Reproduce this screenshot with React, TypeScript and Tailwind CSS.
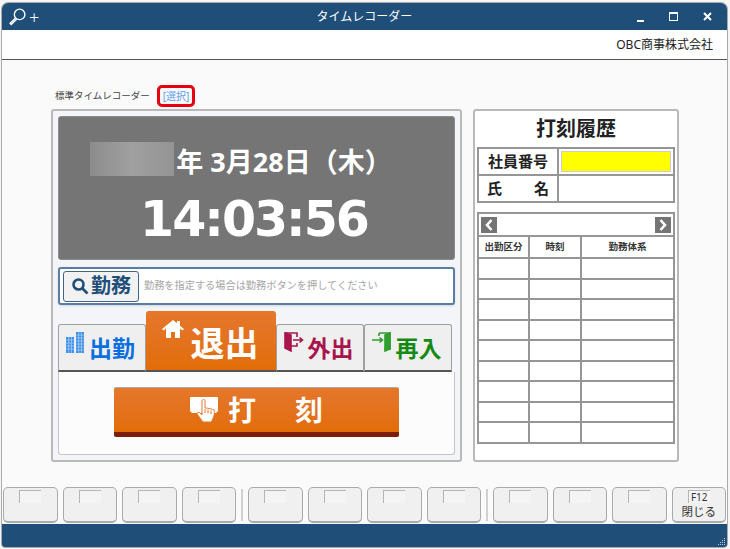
const sans = "font-['Noto_Sans','Noto_Sans_CJK_JP',sans-serif]"

const FKey = ({ label, text }: { label?: string; text?: string }) => (
  <div className="flex h-[36px] flex-1 flex-col items-center rounded-[5px] border border-b-2 border-[#aaaaaa] bg-[#f0f0f0] pt-[2px]">
    <div className="flex h-[13px] w-[22px] shrink-0 items-center justify-center border-t border-l border-[#b5b5b5] bg-[#f4f4f4] text-[10px] leading-none text-[#333]">
      {label}
    </div>
    {text && <div className="mt-[3px] text-[11.5px] leading-none text-[#333]">{text}</div>}
  </div>
)

const Sep = () => <div className="h-[32px] w-[2px] self-center bg-[#d0d0d0]" />

const Tab = ({ color, label, children, w }: { color: string; label: string; children: React.ReactNode; w: string }) => (
  <div className={`flex h-[48px] items-start justify-center rounded-t-[3px] border border-b-2 border-[#a0a0a0] border-b-[#555] bg-[#efefef] pt-[7px] pr-[3px] text-[23px] font-bold ${w} ${color}`}>
    {children}
    <span className="mt-[5px] ml-[4px] leading-none">{label}</span>
  </div>
)

const App = () => {
  const rows = Array.from({ length: 9 })
  return (
    <div className={`flex h-[549px] w-[730px] flex-col overflow-hidden bg-[#f5f5f5] pt-[2px] pr-[2px] pb-[1px] pl-[1px] ${sans}`}>
      <div className="flex h-full flex-col overflow-hidden rounded-t-[7px] rounded-b-[4px] border border-[#aaaaaa]">
        {/* title bar */}
        <div className="relative flex h-[27px] shrink-0 items-center justify-between bg-[#1f4e79] pr-[7px] pl-[6px] text-white">
          <div className="flex items-center gap-[2px]">
            <svg width="19" height="19" viewBox="0 0 18 18" fill="none" stroke="white" strokeWidth="1.3">
              <circle cx="11" cy="7" r="5" />
              <path d="M7.2 10.5 2 15.500l1 1 5.200-5" />
            </svg>
            <span className="text-[18px] leading-none font-light">+</span>
          </div>
          <div className="absolute inset-x-0 text-center text-[12px] leading-none">タイムレコーダー</div>
          <div className="flex items-center gap-[25px] pr-[8px]">
            <div className="mt-[8px] h-[2px] w-[7px] bg-white" />
            <div className="h-[9px] w-[9px] border border-t-2 border-white" />
            <svg width="9" height="9" viewBox="0 0 9 9" stroke="white" strokeWidth="2">
              <path d="M1 1l7 7M8 1 1 8" />
            </svg>
          </div>
        </div>
        {/* company */}
        <div className="flex h-[30px] shrink-0 items-center justify-end border-b border-[#555] bg-white pr-[14px] text-[12px] text-[#222]">
          OBC商事株式会社
        </div>
        {/* body */}
        <div className="flex flex-1 flex-col bg-[#fafafa] pl-[49px]">
          <div className="flex h-[49px] items-start pt-[31px] pl-[4px] text-[9.5px] text-[#444]">
            <span className="leading-none">標準タイムレコーダー</span>
            <span className="relative ml-[13px] text-[10px] leading-none text-[#5b9bf0]">
              [選択]
              <span className="absolute -inset-x-[6px] -inset-y-[6px] rounded-[5px] border-[3px] border-[#e60012]" />
            </span>
          </div>
          <div className="flex gap-[11px]">
            {/* left panel */}
            <div className="flex h-[353px] w-[411px] flex-col rounded-[3px] border-2 border-[#b9b9b9] bg-[#f3f5f9] p-[5px]">
              <div className="relative flex h-[144px] shrink-0 flex-col items-center rounded-[3px] border border-[#8a8a8a] bg-[#757575] text-white">
                <div className="absolute top-[25px] left-[31px] h-[34px] w-[84px] bg-gradient-to-r from-[#8c8c8c] via-[#a0a0a0] to-[#949494]" />
                <div className="relative mt-[27px] ml-[55px] text-[27px] leading-[36px] font-bold">年 3月28日（木）</div>
                <div className="relative mt-[15px] -ml-[5px] font-['DejaVu_Sans',sans-serif] text-[49px] leading-none font-bold tracking-[-2px]">14:03:56</div>
              </div>
              <div className="mt-[7px] flex h-[38px] shrink-0 items-center rounded-[3px] border-2 border-[#5a7ea3] bg-white pl-[3px] shadow-sm">
                <div className="flex h-[31px] w-[76px] shrink-0 items-center justify-center gap-[2px] rounded-[3px] border border-[#3f6488] bg-[#f2f2f2] text-[20px] font-bold text-[#1f4e79]">
                  <svg width="18" height="18" viewBox="0 0 18 18" fill="none" stroke="#1f4e79" strokeWidth="2.6">
                    <circle cx="7.500" cy="7.500" r="5" />
                    <path d="m11 11 5.500 5.500" />
                  </svg>
                  <span className="leading-none">勤務</span>
                </div>
                <span className="ml-[5px] text-[10.2px] text-[#a5a5a5]">勤務を指定する場合は勤務ボタンを押してください</span>
              </div>
              <div className="mt-[5px] flex h-[62px] shrink-0 items-end">
                <Tab w="w-[88px]" color="text-[#0b6fe0]" label="出勤">
                  <svg width="19" height="22" viewBox="0 0 19 22">
                    <rect x="0" y="5" width="8" height="16" fill="#3f8fe8" />
                    <rect x="10" y="0" width="8" height="21" fill="#3f8fe8" />
                    <path d="M0 8h8M0 11h8M0 14h8M0 17h8M10 3h8M10 6h8M10 9h8M10 12h8M10 15h8M10 18h8M2.700 5v16M5.400 5v16M12.700 0v21M15.400 0v21" stroke="#bcdcfa" strokeWidth="0.6" />
                  </svg>
                </Tab>
                <div className="flex h-[61px] w-[130px] items-start justify-center rounded-t-[3px] border-b-2 border-b-[#555] bg-gradient-to-b from-[#e5772b] to-[#e26d05] pt-[9px] pr-[2px] text-[34px] font-bold text-white">
                  <svg width="22" height="18" viewBox="0 0 22 18" fill="white">
                    <path d="M11 0 0 9l1.500 1.500L4 8.500V18h5v-6h4v6h5V8.500l2.500 2L22 9l-4-3.300V1h-3v2.200z" />
                  </svg>
                  <span className="mt-[6px] ml-[7px] leading-none">退出</span>
                </div>
                <Tab w="w-[88px]" color="text-[#a8144c]" label="外出">
                  <svg width="20" height="20" viewBox="0 0 20 20" fill="none" stroke="#a8144c" strokeWidth="1.600">
                    <path d="M1 1h12v4M13 11v3H7" />
                    <path d="M1 1l6 2v16l-6-3z" fill="#a8144c" />
                    <path d="M9 8h9M15.500 5.500 18.500 8l-3 2.500" />
                  </svg>
                </Tab>
                <Tab w="w-[88px]" color="text-[#148a14]" label="再入">
                  <svg width="20" height="20" viewBox="0 0 20 20" fill="none" stroke="#2f9e2f" strokeWidth="1.600">
                    <path d="M7 1h11v16h-6M7 1v3" />
                    <path d="M18 1l-5 2v16l5-2z" fill="#2f9e2f" />
                    <path d="M0 8h10M7.500 5.500 10.500 8l-3 2.500" />
                  </svg>
                </Tab>
              </div>
              <div className="flex flex-1 items-start justify-center rounded-b-[3px] border border-t-0 border-[#c4c4c4] bg-[#fcfcfc] pt-[15px]">
                <div className="flex h-[50px] w-[285px] items-center justify-center gap-[10px] rounded-[2px] border-t border-b-[5px] border-[#aaa] border-b-[#7a1e08] bg-gradient-to-b from-[#e5772b] to-[#e26d05] text-[28px] font-bold text-white">
                  <svg width="28" height="30" viewBox="0 0 28 30">
                    <path d="M0 2h28v14l-2 2H2l-2-2z" fill="white" />
                    <path d="M12 6c0-2 3-2 3 0v7c3 0 7 1 9 2 1 3 0 8-3 12H13L7 19c0-2 2-2 3-1l2 2z" fill="white" stroke="#e5772b" strokeWidth="1" />
                    <path d="M15 14v4M18 14.500v4M21 15.500v3.500" stroke="#e5772b" strokeWidth="1" />
                  </svg>
                  <span className="leading-none">打<span className="ml-[39px]">刻</span></span>
                </div>
              </div>
            </div>
            {/* right panel */}
            <div className="flex h-[353px] w-[206px] flex-col rounded-[3px] border-2 border-[#b9b9b9] bg-white pr-[2px] pl-[2px]">
              <div className="flex h-[36px] shrink-0 items-center justify-center text-[20px] font-bold text-[#222]">打刻履歴</div>
              <div className="grid grid-cols-[78px_1fr] grid-rows-[25px_25px] gap-[2px] border-2 border-[#969696] bg-[#969696] text-[15px] font-bold text-[#222]">
                <div className="flex items-center justify-center bg-white">社員番号</div>
                <div className="bg-white p-[2px]">
                  <div className="h-full border border-[#cccccc] bg-[#ffff00]" />
                </div>
                <div className="flex items-center justify-between bg-white px-[8px]">
                  <span>氏</span><span>名</span>
                </div>
                <div className="bg-white" />
              </div>
              <div className="mt-[9px] flex flex-col gap-[2px] border-2 border-[#969696] bg-[#969696]">
                <div className="flex h-[21px] items-center justify-between bg-white px-[2px]">
                  <div className="flex h-[16px] w-[16px] items-center justify-center bg-[#757575]">
                    <svg width="10" height="12" viewBox="0 0 10 12" fill="none" stroke="white" strokeWidth="2.600"><path d="M7.500 1 3 6l4.500 5" /></svg>
                  </div>
                  <div className="flex h-[16px] w-[16px] items-center justify-center bg-[#757575]">
                    <svg width="10" height="12" viewBox="0 0 10 12" fill="none" stroke="white" strokeWidth="2.600"><path d="M2.500 1 7 6l-4.500 5" /></svg>
                  </div>
                </div>
                <div className="grid grid-cols-[49px_50px_1fr] grid-rows-[20px_repeat(9,18.5px)] gap-[2px] text-[9.5px] font-bold text-[#333]">
                  <div className="flex items-center justify-center bg-white">出勤区分</div>
                  <div className="flex items-center justify-center bg-white">時刻</div>
                  <div className="flex items-center justify-center bg-white">勤務体系</div>
                  {rows.map((_, i) => (
                    <div key={i} className="contents">
                      <div className="bg-white" />
                      <div className="bg-white" />
                      <div className="bg-white" />
                    </div>
                  ))}
                </div>
              </div>
            </div>
          </div>
          <div className="flex-1" />
        </div>
        {/* function keys */}
        <div className="flex shrink-0 gap-[5px] bg-[#fafafa] pr-[1px] pl-[1px]">
          <FKey /><FKey /><FKey /><FKey />
          <Sep />
          <FKey /><FKey /><FKey /><FKey />
          <Sep />
          <FKey /><FKey /><FKey />
          <FKey label="F12" text="閉じる" />
        </div>
        {/* status bar */}
        <div className="relative mt-[1px] h-[23px] shrink-0 bg-[#1f4e79]">
          <svg className="absolute right-[1px] bottom-[1px]" width="9" height="9" viewBox="0 0 9 9" fill="#b9c9d9">
            <rect x="7" y="1" width="1" height="1" />
            <rect x="5" y="3" width="1" height="1" />
            <rect x="7" y="3" width="1" height="1" />
            <rect x="3" y="5" width="1" height="1" />
            <rect x="5" y="5" width="1" height="1" />
            <rect x="7" y="5" width="1" height="1" />
            <rect x="1" y="7" width="1" height="1" />
            <rect x="3" y="7" width="1" height="1" />
            <rect x="5" y="7" width="1" height="1" />
            <rect x="7" y="7" width="1" height="1" />
          </svg>
        </div>
      </div>
    </div>
  )
}

export default App
